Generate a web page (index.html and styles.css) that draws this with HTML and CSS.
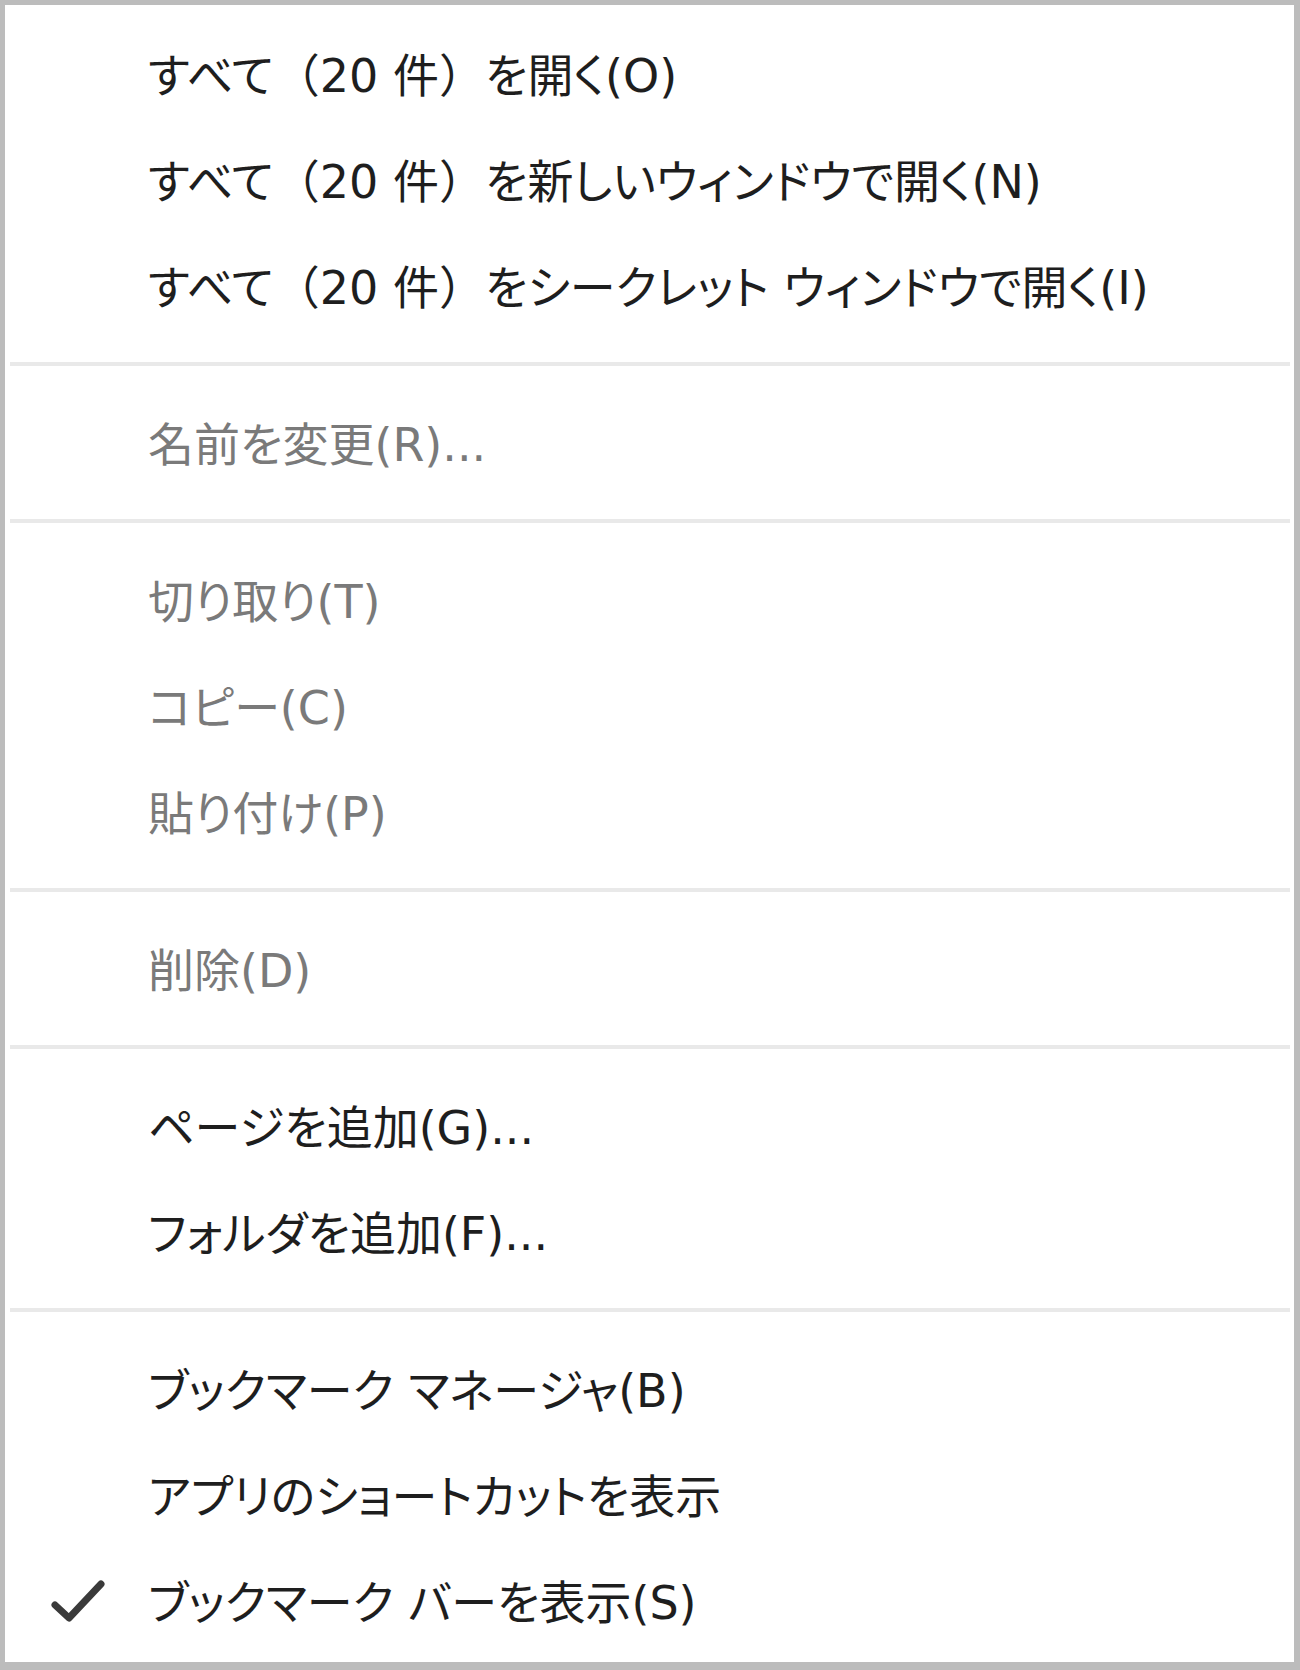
FILE: index.html
```html
<!DOCTYPE html>
<html lang="ja">
<head>
<meta charset="utf-8">
<link rel="stylesheet" href="styles.css">
</head>
<body>
<div class="menu">
  <div class="item">すべて<span class="fw">（</span>20 件<span class="fw">）</span>を開く(O)</div>
  <div class="item">すべて<span class="fw">（</span>20 件<span class="fw">）</span>を新しいウィンドウで開く(N)</div>
  <div class="item">すべて<span class="fw">（</span>20 件<span class="fw">）</span>をシークレット ウィンドウで開く(I)</div>
  <div class="sep"></div>
  <div class="item disabled">名前を変更(R)...</div>
  <div class="sep"></div>
  <div class="item disabled">切り取り(T)</div>
  <div class="item disabled">コピー(C)</div>
  <div class="item disabled">貼り付け(P)</div>
  <div class="sep"></div>
  <div class="item disabled">削除(D)</div>
  <div class="sep"></div>
  <div class="item">ページを追加(G)...</div>
  <div class="item">フォルダを追加(F)...</div>
  <div class="sep"></div>
  <div class="item">ブックマーク マネージャ(B)</div>
  <div class="item">アプリのショートカットを表示</div>
  <div class="item checked"><svg class="check" viewBox="0 0 54 46" width="54" height="46"><path d="M4 27 L18 40 L50 6" fill="none" stroke="#3a3a3a" stroke-width="7" stroke-linecap="round" stroke-linejoin="round"/></svg>ブックマーク バーを表示(S)</div>
</div>
</body>
</html>
```
FILE: styles.css
```css
html, body {
  margin: 0;
  padding: 0;
  background: #ffffff;
}
.menu {
  box-sizing: border-box;
  width: 1300px;
  height: 1670px;
  background: #ffffff;
  border-style: solid;
  border-color: #bcbcbc;
  border-width: 5px 6px 8px 5px;
  padding-top: 16px;
  font-family: "DejaVu Sans", "Noto Sans CJK JP", sans-serif;
  font-size: 46px;
  font-feature-settings: "palt";
  color: #1e1e1e;
}
.item {
  position: relative;
  box-sizing: border-box;
  height: 106px;
  padding-top: 4px;
  line-height: 102px;
  padding-left: 143px;
  white-space: nowrap;
}
.fw {
  font-feature-settings: normal;
}
.item.disabled {
  color: #7a7a7a;
}
.check {
  position: absolute;
  left: 46px;
  top: 30px;
}
.sep {
  height: 4px;
  margin: 23px 4px 24px 5px;
  background: #e9e9e9;
}
```
